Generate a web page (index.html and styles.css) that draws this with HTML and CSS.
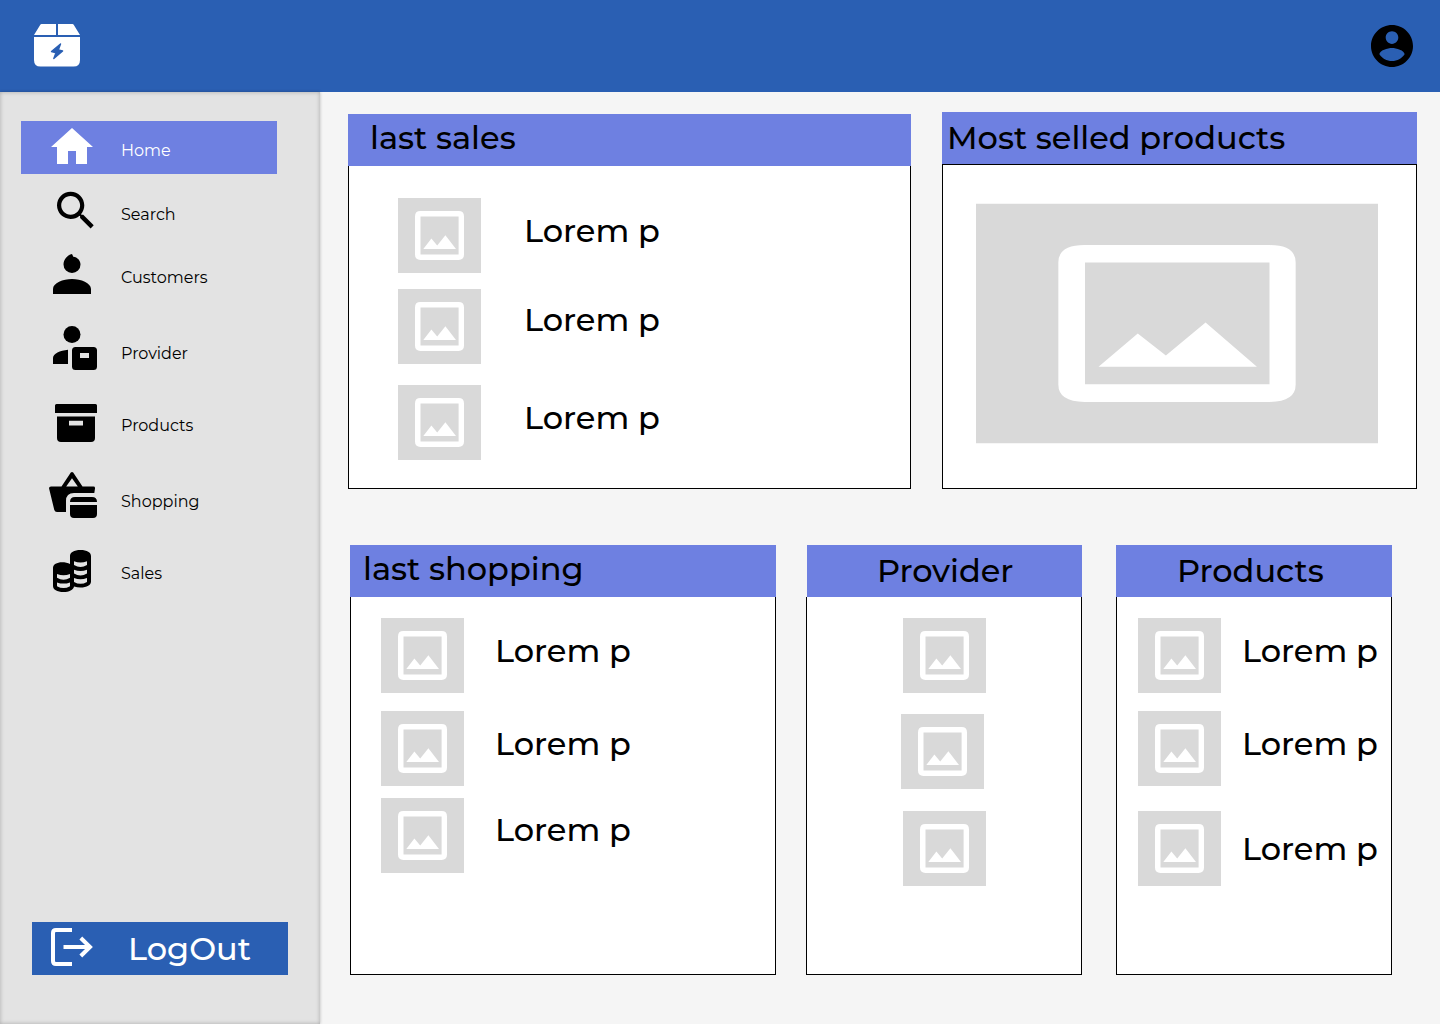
FILE: index.html
```html
<!DOCTYPE html>
<html lang="en">
<head>
<meta charset="utf-8">
<title>Dashboard</title>
<link rel="stylesheet" href="styles.css">
</head>
<body>
<svg class="defs" width="0" height="0" aria-hidden="true">
  <symbol id="picture" viewBox="0 0 83 75" preserveAspectRatio="none">
    <rect width="83" height="75" fill="#d9d9d9"/>
    <path fill="#fff" fill-rule="evenodd" d="M22.400 13H60.600Q66 13 66 18.400V56.600Q66 62 60.600 62H22.400Q17 62 17 56.600V18.400Q17 13 22.400 13ZM22.500 18.400V56.500H60.600V18.400Z"/>
    <path fill="#fff" d="M25.300 51L33.400 40.600L39.200 47.500L47.400 37.200L58 51Z"/>
  </symbol>
</svg>

<header class="topbar">
  <svg class="logo" width="46" height="43" viewBox="0 0 46 43">
    <path fill="#fff" d="M7.500 0H22V11H0L6 1.200Q6.700 0 7.500 0ZM24 0H38.500Q39.300 0 40 1.200L46 11H24ZM0 13H46V36Q46 42.600 39.500 42.600H6.500Q0 42.600 0 36Z"/>
    <path fill="#2a5fb3" stroke="#2a5fb3" stroke-width="1.400" stroke-linejoin="round" d="M26.500 20L17.500 27.500L22 28.700L19.800 34.500L28.600 27L24.300 26Z"/>
  </svg>
  <svg class="avatar" width="42" height="42" viewBox="2 2 20 20">
    <path d="M12 2C6.480 2 2 6.480 2 12s4.480 10 10 10 10-4.480 10-10S17.520 2 12 2zm0 3c1.660 0 3 1.340 3 3s-1.340 3-3 3-3-1.340-3-3 1.340-3 3-3zm0 14.200c-2.500 0-4.710-1.280-6-3.220.030-1.990 4-3.080 6-3.080 1.990 0 5.970 1.090 6 3.080-1.290 1.940-3.500 3.220-6 3.220z"/>
  </svg>
</header>

<div class="page">
  <aside class="sidebar">
    <nav class="menu">
      <a class="item active">
        <svg class="icon" viewBox="48 125 50 50"><path d="M72 128L93 147H87V164H76V151H68V164H57V147H51Z"/></svg>
        <span class="name home">Home</span>
      </a>
      <a class="item search-row">
        <svg class="icon" viewBox="48 190 50 50"><path transform="translate(50.700 185.400) scale(2.100)" d="M15.500 14h-.790l-.280-.270C15.410 12.590 16 11.110 16 9.500 16 5.910 13.090 3 9.500 3S3 5.910 3 9.500 5.910 16 9.500 16c1.610 0 3.090-.590 4.230-1.570l.270.280v.790l5 4.990L20.490 19l-4.990-5zm-6 0C7.010 14 5 11.990 5 9.500S7.010 5 9.500 5 14 7.010 14 9.500 11.990 14 9.500 14z"/></svg>
        <span class="name search">Search</span>
      </a>
      <a class="item customers-row">
        <svg class="icon" viewBox="48 253 50 50"><path d="M71.700 254C72.600 254.600 72.800 255.600 73.300 256.700C77.500 257.200 80.500 260.500 80.500 264.500A8.500 8.500 0 0 1 63.500 264.500C63.500 259.500 67 255.500 71.700 254ZM53 294V289C53 283 63 279 72 279S91 283 91 289V294Z"/></svg>
        <span class="name customers">Customers</span>
      </a>
      <a class="item provider-row">
        <svg class="icon" viewBox="48 329 50 50"><circle cx="72" cy="334.500" r="8.500"/><path fill-rule="evenodd" d="M68 349.700V364H53V358C53 353.500 60 350.500 68 349.700ZM75.500 347H93.500Q97 347 97 350.500V366.500Q97 370 93.500 370H75.500Q72 370 72 366.500V350.500Q72 347 75.500 347ZM80 353V358H89V353Z"/></svg>
        <span class="name provider">Provider</span>
      </a>
      <a class="item products-row">
        <svg class="icon" viewBox="48 401 50 50"><path fill-rule="evenodd" d="M56.500 404H95.500Q97 404 97 405.500V413H55V405.500Q55 404 56.500 404ZM57 416.500H95V438Q95 442 91 442H61Q57 442 57 438ZM69 420.700V425.500H83V420.700Z"/></svg>
        <span class="name products">Products</span>
      </a>
      <a class="item shopping-row">
        <svg class="icon" viewBox="48 477 50 50"><path fill-rule="evenodd" d="M70.800 472.600Q72 471.200 73.200 472.600L82.500 486.500H93.500Q95.300 486.500 95 488.500L94.300 493H74Q66 493 66 501V512H57Q55 512 54.300 510L49.200 489Q48.600 486.500 51 486.500H61.500ZM72 478.200L66.200 486.500H77.800ZM75 497H92Q97 497 97 502H70Q70 497 75 497ZM70 505H97V514Q97 518 93 518H74Q70 518 70 514Z"/></svg>
        <span class="name shopping">Shopping</span>
      </a>
      <a class="item sales-row">
        <svg class="icon" viewBox="48 549 50 50">
          <path d="M53 568C53 564.500 57 562.300 62 562.300C65 562.300 68 562.800 70 564V556C70 552.500 74 550 80.500 550S91 552.500 91 556V581.500C91 585 87 587.500 80.500 587.500Q77 587.500 74 586.500C73.500 590 69 592 63.500 592C57 592 53 589.500 53 586Z"/>
          <g class="gaps"><path d="M74 561.200Q80.500 563.600 87 561.200V565Q80.500 568.800 74 565ZM74 569.800Q80.500 572.200 87 569.800V573.600Q80.500 577.400 74 573.600ZM74 578.100Q80.500 580.500 87 578.100V581.900Q80.500 585.700 74 581.900ZM57 574Q63.500 576.400 70 574V577.800Q63.500 581.600 57 577.800ZM57 582.400Q63.500 584.800 70 582.400V586.200Q63.500 590 57 586.200Z"/></g>
        </svg>
        <span class="name sales">Sales</span>
      </a>
    </nav>
    <button class="logout">
      <svg width="42" height="38" viewBox="0 0 42 38" fill="none" stroke="#fff" stroke-width="4"><path d="M21 2H5Q2 2 2 5V33Q2 36 5 36H21M12.500 19H38M29.800 10L39 19L29.800 28"/></svg>
      <span class="big out">LogOut</span>
    </button>
  </aside>

  <main class="content">
    <div class="upper">
      <section class="card last-sales">
        <h2 class="big title">last sales</h2>
        <div class="body">
          <div class="entry"><svg class="thumb"><use href="#picture"/></svg><span class="big lorem">Lorem p</span></div>
          <div class="entry"><svg class="thumb"><use href="#picture"/></svg><span class="big lorem raised">Lorem p</span></div>
          <div class="entry"><svg class="thumb"><use href="#picture"/></svg><span class="big lorem">Lorem p</span></div>
        </div>
      </section>
      <section class="card most-selled">
        <h2 class="big title">Most selled products</h2>
        <div class="body"><svg class="chart"><use href="#picture" y="0.500" width="402" height="240"/></svg></div>
      </section>
    </div>
    <div class="lower">
      <section class="card last-shopping">
        <h2 class="big title">last shopping</h2>
        <div class="body">
          <div class="entry"><svg class="thumb"><use href="#picture"/></svg><span class="big lorem">Lorem p</span></div>
          <div class="entry"><svg class="thumb"><use href="#picture"/></svg><span class="big lorem">Lorem p</span></div>
          <div class="entry"><svg class="thumb"><use href="#picture"/></svg><span class="big lorem nudged">Lorem p</span></div>
        </div>
      </section>
      <section class="card providers">
        <h2 class="big title">Provider</h2>
        <div class="body">
          <div class="entry"><svg class="thumb"><use href="#picture"/></svg></div>
          <div class="entry"><svg class="thumb"><use href="#picture"/></svg></div>
          <div class="entry"><svg class="thumb"><use href="#picture"/></svg></div>
        </div>
      </section>
      <section class="card product-list">
        <h2 class="big title">Products</h2>
        <div class="body">
          <div class="entry"><svg class="thumb"><use href="#picture"/></svg><span class="big lorem">Lorem p</span></div>
          <div class="entry"><svg class="thumb"><use href="#picture"/></svg><span class="big lorem">Lorem p</span></div>
          <div class="entry"><svg class="thumb"><use href="#picture"/></svg><span class="big lorem lowered">Lorem p</span></div>
        </div>
      </section>
    </div>
  </main>
</div>
</body>
</html>
```

FILE: styles.css
```css
* { box-sizing: border-box; }
body {
  margin: 0;
  width: 1440px;
  height: 1024px;
  overflow: hidden;
  display: flex;
  flex-direction: column;
  background: #f5f5f5;
  color: #000;
  font-family: Montserrat, Inter, sans-serif;
}
svg { display: block; flex: none; }
.defs { display: none; }

.topbar {
  height: 92px;
  flex: none;
  display: flex;
  justify-content: space-between;
  align-items: flex-start;
  padding: 24px 27px 0 34px;
  background: #2a5fb3;
}
.avatar { margin-top: 1px; }

.page { display: flex; height: 932px; }
.sidebar {
  width: 320px;
  flex: none;
  display: flex;
  flex-direction: column;
  justify-content: space-between;
  padding: 29px 32px 49px 21px;
  background: #e3e3e3;
  box-shadow: inset 0 0 4px rgba(0, 0, 0, .25), 0 0 3px rgba(0, 0, 0, .25);
}
.menu { display: flex; flex-direction: column; }
.item {
  display: flex;
  align-items: center;
  gap: 23px;
  width: 256px;
  height: 50px;
  padding-left: 27px;
}
.icon { width: 50px; height: 50px; overflow: visible; }
.gaps { fill: #e3e3e3; }
.active {
  height: 53px;
  padding-top: 5px;
  background: #6e80e1;
  color: #fff;
  fill: #fff;
}
.home { margin-top: 1px; }
.search-row { margin-top: 16px; }
.customers-row { margin-top: 13px; }
.provider-row { margin-top: 26px; }
.products-row { margin-top: 22px; }
.shopping-row { margin-top: 26px; }
.sales-row { margin-top: 22px; }
.name { font-size: 16px; line-height: 20px; white-space: nowrap; }

.logout {
  display: flex;
  align-items: flex-start;
  width: 256px;
  height: 53px;
  margin-left: 11px;
  padding: 6px 0 0 19px;
  border: 0;
  background: #2a5fb3;
  color: #fff;
  font-family: inherit;
}
.out { margin: 1px 0 0 35px; }

.big {
  font-size: 32px;
  font-weight: 500;
  line-height: 39px;
  white-space: nowrap;
}

.content { display: flex; flex-direction: column; gap: 56px; padding: 20px 0 0 28px; }
.upper, .lower { display: flex; align-items: flex-start; }
.card { display: flex; flex-direction: column; }
.title { margin: 0; height: 52px; flex: none; background: #6e80e1; }
.body {
  flex: 1;
  display: flex;
  flex-direction: column;
  background: #fff;
  border: 1px solid #000;
  border-top: 0;
}
.entry { display: flex; align-items: flex-start; height: 75px; }
.thumb { width: 83px; height: 75px; }
.lorem { margin: 13px 0 0 43px; }
.raised { margin-top: 11px; }
.nudged { margin-top: 12px; }
.lowered { margin-top: 18px; }

.last-sales { width: 563px; height: 375px; margin-top: 2px; }
.last-sales .title { padding: 4px 0 0 22px; }
.last-sales .body { padding: 32px 0 0 49px; }
.last-sales .entry + .entry { margin-top: 16px; }
.last-sales .entry + .entry + .entry { margin-top: 21px; }

.most-selled { width: 475px; height: 377px; margin-left: 31px; }
.most-selled .title { padding: 6px 0 0 5px; }
.most-selled .body { border-top: 1px solid #000; padding: 38px 0 0 33px; }
.chart { width: 402px; height: 241px; }

.lower .card { height: 430px; }
.last-shopping { width: 426px; margin-left: 2px; }
.last-shopping .title { padding: 4px 0 0 13px; }
.last-shopping .body { padding: 21px 0 0 30px; }
.last-shopping .entry + .entry { margin-top: 18px; }
.last-shopping .entry + .entry + .entry { margin-top: 12px; }
.last-shopping .lorem { margin-left: 31px; }

.providers { width: 276px; margin-left: 30px; }
.providers .title { margin-left: 1px; padding: 6px 0 0 70px; }
.providers .body { padding: 21px 0 0 96px; }
.providers .entry + .entry { margin: 21px 0 0 -2px; }
.providers .entry + .entry + .entry { margin: 22px 0 0; }

.product-list { width: 276px; margin-left: 34px; }
.product-list .title { padding: 6px 0 0 61px; }
.product-list .body { padding: 21px 0 0 21px; }
.product-list .entry + .entry { margin-top: 18px; }
.product-list .entry + .entry + .entry { margin-top: 25px; }
.product-list .lorem { margin-left: 21px; }
```
